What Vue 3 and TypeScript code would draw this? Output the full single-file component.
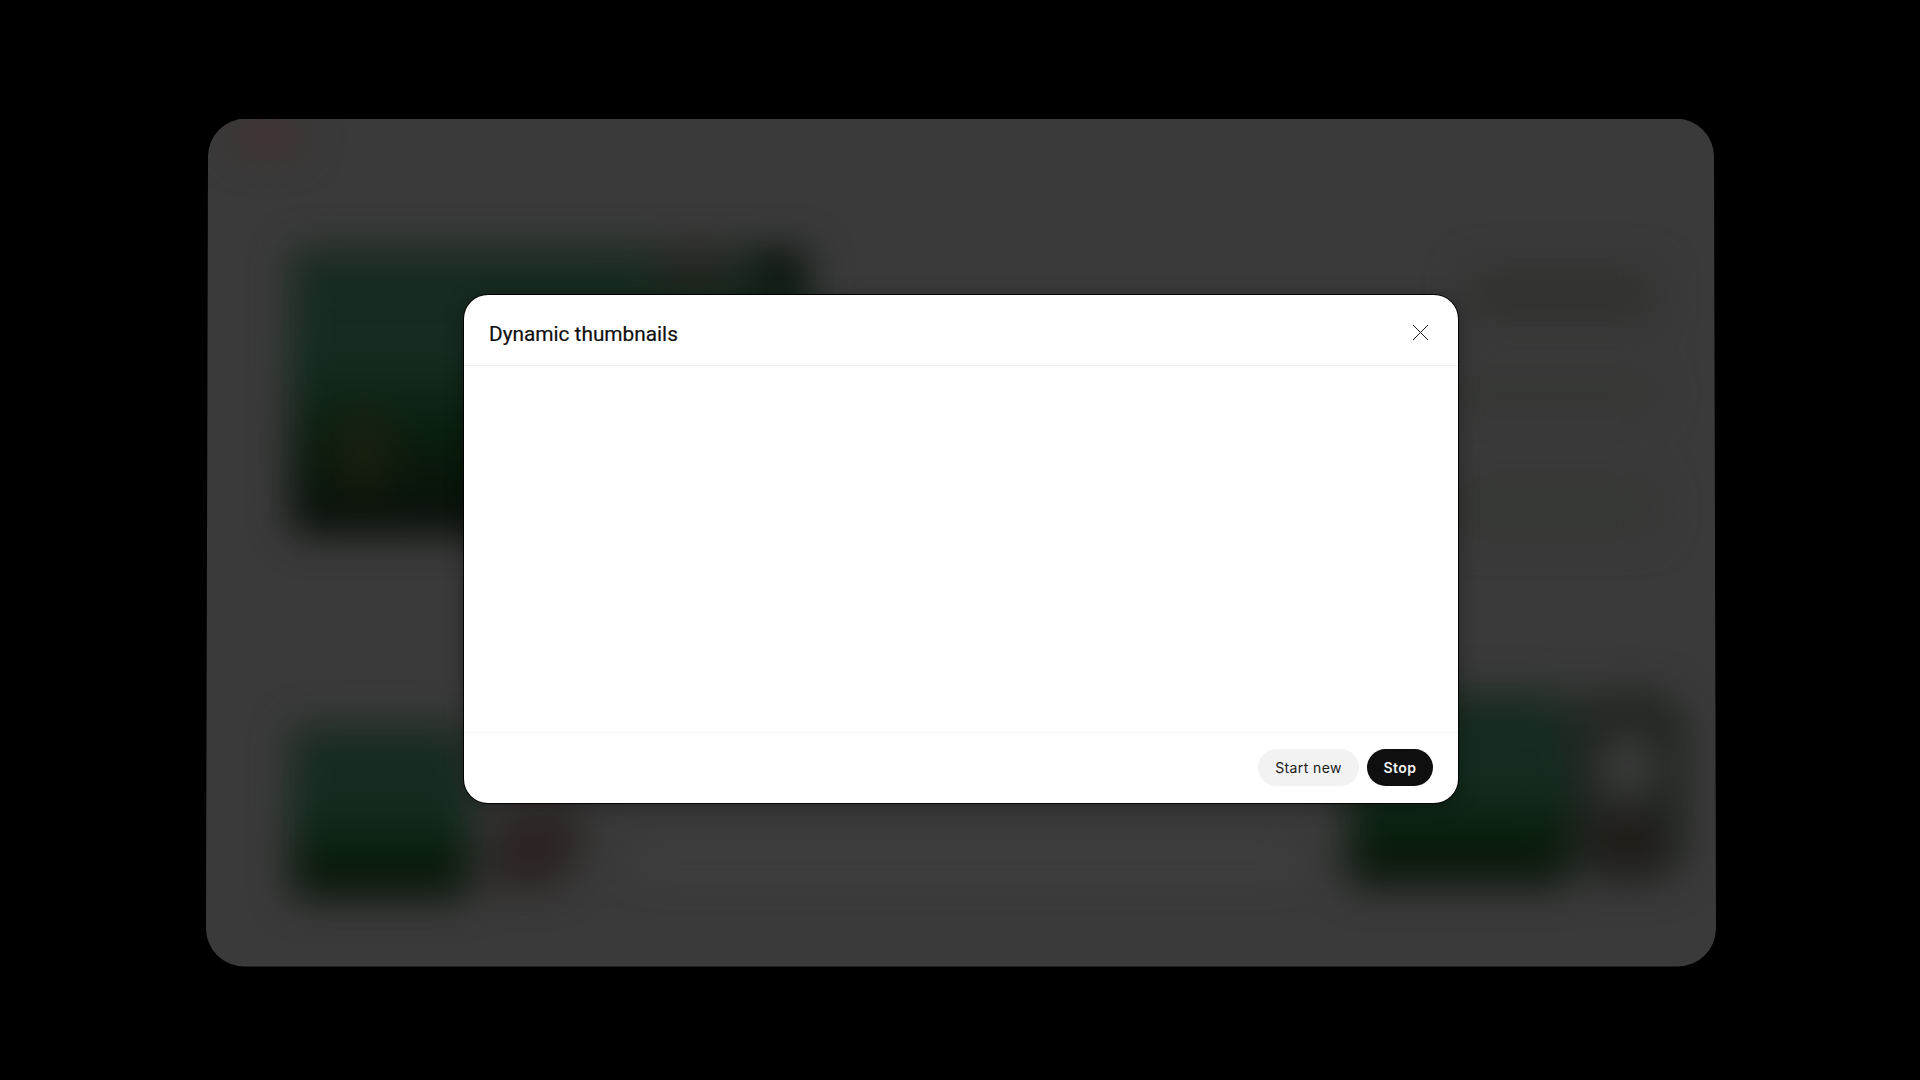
<script setup lang="ts">
const title: string = 'Dynamic thumbnails'
</script>

<template>
  <div class="stage">
    <div class="frame">
      <div class="page">
        <div class="topbar"><div class="logo"></div></div>
        <div class="main">
          <div class="hero"></div>
          <div class="side">
            <div class="side-row side-a"></div>
            <div class="side-row side-b"></div>
            <div class="side-row side-c"></div>
          </div>
        </div>
        <div class="cards">
          <div class="card card-left"><div class="green"></div><div class="portrait"></div></div>
          <div class="bar"></div>
          <div class="card card-right"><div class="green green-wide"></div><div class="portrait portrait-tall"></div></div>
        </div>
      </div>
    </div>

    <section class="modal">
      <header class="modal-head">
        <h2 class="modal-title">{{ title }}</h2>
        <button class="close" type="button" aria-label="Close">
          <svg width="17" height="17" viewBox="0 0 17 17" fill="none">
            <path d="M1 1 16 16M16 1 1 16" stroke="#1a1a1a" stroke-width="1" />
          </svg>
        </button>
      </header>
      <div class="modal-body"></div>
      <footer class="modal-foot">
        <button class="btn btn-soft" type="button">Start new</button>
        <button class="btn btn-solid" type="button">Stop</button>
      </footer>
    </section>
  </div>
</template>

<style>
html, body { margin: 0; background: #000; }
</style>

<style scoped>
.stage {
  width: 1920px;
  height: 1080px;
  background: #000;
  display: grid;
  grid-template: 1fr / 1fr;
  overflow: hidden;
}
.frame {
  grid-area: 1 / 1;
  margin: 118.5px 0 0 206px;
  width: 1510px;
  height: 848px;
  background: #3a3a3a;
  overflow: hidden;
  clip-path: path('M40 0H1470A38 38 0 0 1 1508 38L1510 810A38 38 0 0 1 1472 848H38A38 38 0 0 1 0 810L2 38A38 38 0 0 1 40 0Z');
}
.page {
  display: flex;
  flex-direction: column;
  height: 100%;
  filter: blur(19px);
}
.topbar { height: 34px; padding-left: 29px; flex: none; }
.logo { width: 66px; height: 34px; background: #41302f; border-radius: 8px; }
.main {
  display: flex;
  margin-top: 95px;
  padding-left: 85px;
  height: 287px;
  flex: none;
}
.hero {
  flex: none;
  width: 520px;
  height: 287px;
  border-radius: 14px;
  background:
    radial-gradient(ellipse 45px 65px at 72px 205px, #20210f 0%, rgba(32,33,15,0) 100%),
    radial-gradient(ellipse 55px 30px at 405px 20px, #2a1e1c 0%, rgba(42,30,28,0) 100%),
    radial-gradient(ellipse 35px 50px at 490px 20px, #060806 0%, rgba(6,8,6,0) 100%),
    linear-gradient(180deg, #192b20 0%, #152c20 38%, #081c0c 68%, #090e09 100%);
}
.side {
  margin-left: 80px;
  flex: 1;
  display: flex;
  flex-direction: column;
  align-items: flex-end;
  padding-right: 60px;
}
.side-row { background: #313230; border-radius: 8px; }
.side-a { height: 60px; width: 190px; margin-top: 20px; }
.side-b { height: 44px; width: 210px; margin-top: 50px; background: #353734; }
.side-c { height: 60px; width: 210px; margin-top: 66px; background: #353734; }
.cards {
  display: flex;
  margin-top: 191px;
  padding: 0 30px 0 85px;
  height: 190px;
  flex: none;
}
.card { display: flex; }
.green {
  flex: none;
  width: 180px;
  height: 173px;
  border-radius: 12px;
  background: linear-gradient(180deg, #192b20 0%, #152c20 45%, #081c0a 80%, #0c140c 100%);
}
.portrait {
  flex: none;
  width: 92px;
  height: 80px;
  margin: 82px 0 0 16px;
  border-radius: 30px;
  background: #2a2321;
  transform: skewX(-14deg);
}
.card-left { width: 346px; }
.bar {
  width: 660px;
  height: 12px;
  margin-top: 130px;
  background: #464646;
}
.card-right { margin-left: auto; margin-top: -34px; height: 240px; }
.green-wide {
  width: 222px;
  height: 195px;
  background: linear-gradient(180deg, #192b20 0%, #152c20 45%, #081c0a 78%, #0e160e 100%);
}
.portrait-tall {
  width: 116px;
  height: 190px;
  margin: 0;
  transform: none;
  border-radius: 40px;
  background:
    radial-gradient(ellipse 45px 30px at 50% 148px, #211815 40%, rgba(33,24,21,0) 100%),
    radial-gradient(ellipse 40px 50px at 50% 75px, #3d3d3d 40%, rgba(61,61,61,0) 100%),
    #202520;
}
.modal {
  grid-area: 1 / 1;
  margin: 295px 0 0 464px;
  width: 994px;
  height: 508px;
  border-radius: 24px;
  background: #fff;
  box-shadow: 0 0 0 1px rgba(0, 0, 0, 0.9), 0 3px 20px rgba(0, 0, 0, 0.35);
  display: flex;
  flex-direction: column;
  overflow: hidden;
  position: relative;
}
.modal-head {
  height: 71px;
  flex: none;
  display: flex;
  align-items: center;
  justify-content: space-between;
  padding: 0 26px 0 25px;
  border-bottom: 1px solid #f1f1f1;
  box-sizing: border-box;
}
.modal-title {
  margin: 0;
  font: 400 20.8px/28px Roboto, sans-serif;
  -webkit-text-stroke: 0.2px #0f0f0f;
  color: #0f0f0f;
  padding-top: 7px;
}
.close {
  width: 24px;
  height: 24px;
  padding: 0;
  border: 0;
  background: none;
  display: grid;
  place-items: center;
  margin-top: 4px;
}
.modal-body { flex: 1; }
.modal-foot {
  flex: none;
  height: 71px;
  box-sizing: border-box;
  border-top: 1px solid #f5f5f5;
  display: flex;
  justify-content: flex-end;
  align-items: flex-start;
  gap: 8px;
  padding: 16px 25px 0 0;
}
.btn {
  height: 37px;
  border: 0;
  border-radius: 19px;
  font: 400 14px/37px Inter, sans-serif;
  padding: 0;
  letter-spacing: 0.4px;
}
.btn-soft { width: 101px; background: #f2f2f2; color: #1a1a1a; }
.btn-solid { width: 66px; background: #0f0f0f; color: #f4f4f4; font-weight: 600; }
</style>
